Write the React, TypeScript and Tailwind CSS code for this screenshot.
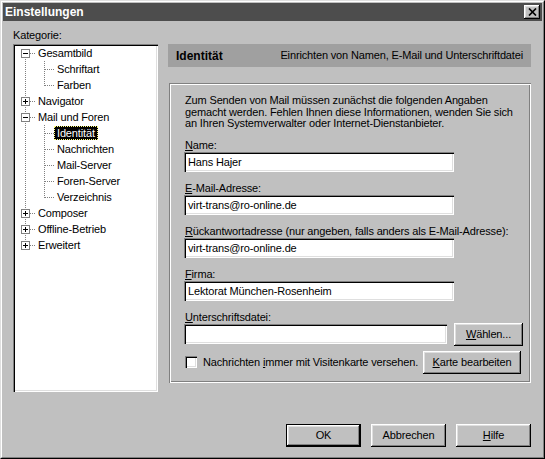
import React from 'react';

type TreeRow = {
  label: string;
  level: 0 | 1;
  toggle?: 'plus' | 'minus';
  first?: boolean;
  last?: boolean;
  selected?: boolean;
};

const rows: TreeRow[] = [
  { label: 'Gesamtbild', level: 0, toggle: 'minus', first: true },
  { label: 'Schriftart', level: 1 },
  { label: 'Farben', level: 1, last: true },
  { label: 'Navigator', level: 0, toggle: 'plus' },
  { label: 'Mail und Foren', level: 0, toggle: 'minus' },
  { label: 'Identität', level: 1, selected: true },
  { label: 'Nachrichten', level: 1 },
  { label: 'Mail-Server', level: 1 },
  { label: 'Foren-Server', level: 1 },
  { label: 'Verzeichnis', level: 1, last: true },
  { label: 'Composer', level: 0, toggle: 'plus' },
  { label: 'Offline-Betrieb', level: 0, toggle: 'plus' },
  { label: 'Erweitert', level: 0, toggle: 'plus', last: true },
];

const dot: React.SVGProps<SVGLineElement> = {
  stroke: '#808080',
  strokeDasharray: '1 1',
  shapeRendering: 'crispEdges',
};

function Gutter({ row }: { row: TreeRow }) {
  if (row.level === 0) {
    return (
      <svg width="20" height="16" className="shrink-0">
        <line x1="10.5" y1={row.first ? 8 : 0} x2="10.5" y2={row.last ? 9 : 16} {...dot} />
        <line x1="15" y1="8.5" x2="20" y2="8.5" {...dot} />
        <rect x="6.5" y="4.5" width="8" height="8" fill="#fff" stroke="#808080" shapeRendering="crispEdges" />
        <line x1="8" y1="8.5" x2="13" y2="8.5" stroke="#000" shapeRendering="crispEdges" />
        {row.toggle === 'plus' && (
          <line x1="10.5" y1="6" x2="10.5" y2="11" stroke="#000" shapeRendering="crispEdges" />
        )}
      </svg>
    );
  }
  return (
    <svg width="39" height="16" className="shrink-0">
      <line x1="10.5" y1="0" x2="10.5" y2="16" {...dot} />
      <line x1="29.5" y1="0" x2="29.5" y2={row.last ? 9 : 16} {...dot} />
      <line x1="30" y1="8.5" x2="39" y2="8.5" {...dot} />
    </svg>
  );
}

function Raised({
  children,
  className = '',
  isDefault = false,
}: {
  children: React.ReactNode;
  className?: string;
  isDefault?: boolean;
}) {
  return (
    <div
      className={`flex h-[23px] shrink-0 items-center justify-center bg-[#c0c0c0] ${
        isDefault ? 'border border-black' : ''
      } shadow-[inset_-1px_-1px_#000,inset_1px_1px_#fff,inset_-2px_-2px_#808080,inset_2px_2px_#dfdfdf] ${className}`}
    >
      {children}
    </div>
  );
}

function Field({ value, className = '' }: { value?: string; className?: string }) {
  return (
    <div
      className={`h-[20px] shrink-0 bg-white pl-[4px] leading-[20px] shadow-[inset_1px_1px_#808080,inset_2px_2px_#000,inset_-1px_-1px_#fff,inset_-2px_-2px_#dfdfdf] ${className}`}
    >
      {value}
    </div>
  );
}

function Label({ hot, rest }: { hot: string; rest: string }) {
  return (
    <div className="pl-px leading-[12px]">
      <span className="underline">{hot}</span>
      {rest}
    </div>
  );
}

export default function App() {
  return (
    <div className="h-[459px] w-[545px] select-none whitespace-nowrap border border-t-[#dfdfdf] border-l-[#dfdfdf] border-r-black border-b-black bg-[#c0c0c0] font-['Liberation_Sans',Arial,sans-serif] text-[11px] tracking-[-0.15px] text-black">
      <div className="flex h-full flex-col border border-t-white border-l-white border-r-[#808080] border-b-[#808080] p-px">
        {/* title bar */}
        <div className="flex h-[18px] shrink-0 items-center justify-between bg-[#4d4d4d] px-[2px]">
          <span className="text-[12px] font-bold leading-none tracking-normal text-white">Einstellungen</span>
          <div className="flex h-[14px] w-[16px] items-center justify-center bg-[#c0c0c0] shadow-[inset_-1px_-1px_#000,inset_1px_1px_#fff,inset_-2px_-2px_#808080,inset_2px_2px_#dfdfdf]">
            <svg width="9" height="8" viewBox="0 0 9 8">
              <path d="M1 0.5L8 7.5M8 0.5L1 7.5" stroke="#000" strokeWidth="1.7" />
            </svg>
          </div>
        </div>

        <div className="flex pl-[10px]">
          {/* category tree */}
          <div className="flex w-[145px] flex-col">
            <div className="mt-[8px] leading-[13px]">Kategorie:</div>
            <div className="mt-[2px] h-[348px] bg-white pl-[2px] pt-px shadow-[inset_1px_1px_#808080,inset_2px_2px_#000,inset_-1px_-1px_#fff,inset_-2px_-2px_#dfdfdf]">
              {rows.map((row) => (
                <div key={row.label} className="flex h-4 items-center">
                  <Gutter row={row} />
                  <span
                    className={`h-[14px] px-[3px] leading-[14px] ${
                      row.selected ? 'bg-black text-white outline-1 outline-dotted outline-[#ffff80] -outline-offset-1' : ''
                    }`}
                  >
                    {row.label}
                  </span>
                </div>
              ))}
            </div>
          </div>

          {/* right side */}
          <div className="ml-[10px] mt-[23px] flex w-[363px] flex-col">
            <div className="flex h-[23px] items-center justify-between bg-[#a0a0a0] px-[8px]">
              <span className="text-[12px] font-bold tracking-normal">Identität</span>
              <span>Einrichten von Namen, E-Mail und Unterschriftdatei</span>
            </div>

            <div className="ml-px mt-[16px] flex h-[300px] flex-col pl-[15px] pr-[10px] pt-[12px] shadow-[inset_1px_1px_#808080,inset_2px_2px_#fff,inset_-1px_-1px_#fff,inset_-2px_-2px_#808080]">
              <p className="pl-px leading-[11.5px]">
                Zum Senden von Mail müssen zunächst die folgenden Angaben
                <br />
                gemacht werden. Fehlen Ihnen diese Informationen, wenden Sie sich
                <br />
                an Ihren Systemverwalter oder Internet-Dienstanbieter.
              </p>

              <div className="mt-[9px]">
                <Label hot="N" rest="ame:" />
                <Field value="Hans Hajer" className="mt-px w-[270px]" />
              </div>
              <div className="mt-[10px]">
                <Label hot="E" rest="-Mail-Adresse:" />
                <Field value="virt-trans@ro-online.de" className="mt-px w-[270px]" />
              </div>
              <div className="mt-[10px]">
                <Label hot="R" rest="ückantwortadresse (nur angeben, falls anders als E-Mail-Adresse):" />
                <Field value="virt-trans@ro-online.de" className="mt-px w-[270px]" />
              </div>
              <div className="mt-[10px]">
                <Label hot="F" rest="irma:" />
                <Field value="Lektorat München-Rosenheim" className="mt-px w-[270px]" />
              </div>
              <div className="mt-[10px]">
                <Label hot="U" rest="nterschriftsdatei:" />
                <div className="flex items-center">
                  <Field className="w-[263px]" />
                  <Raised className="ml-[7px] w-[69px]">
                    <span>
                      <span className="underline">W</span>ählen...
                    </span>
                  </Raised>
                </div>
              </div>

              <div className="mt-[5px] flex items-center">
                <div className="ml-px h-[12px] w-[12px] shrink-0 bg-white shadow-[inset_1px_1px_#808080,inset_2px_2px_#000,inset_-1px_-1px_#fff,inset_-2px_-2px_#dfdfdf]" />
                <span className="ml-[6px]">
                  Nachrichten <span className="underline">i</span>mmer mit Visitenkarte versehen.
                </span>
                <Raised className="ml-auto w-[98px]">
                  <span>
                    <span className="underline">K</span>arte bearbeiten
                  </span>
                </Raised>
              </div>
            </div>
          </div>
        </div>

        {/* dialog buttons */}
        <div className="mb-[9px] mt-auto flex justify-end gap-[10px] pr-[11px]">
          <Raised isDefault className="w-[75px]">
            OK
          </Raised>
          <Raised className="w-[75px]">Abbrechen</Raised>
          <Raised className="w-[75px]">
            <span>
              <span className="underline">H</span>ilfe
            </span>
          </Raised>
        </div>
      </div>
    </div>
  );
}
